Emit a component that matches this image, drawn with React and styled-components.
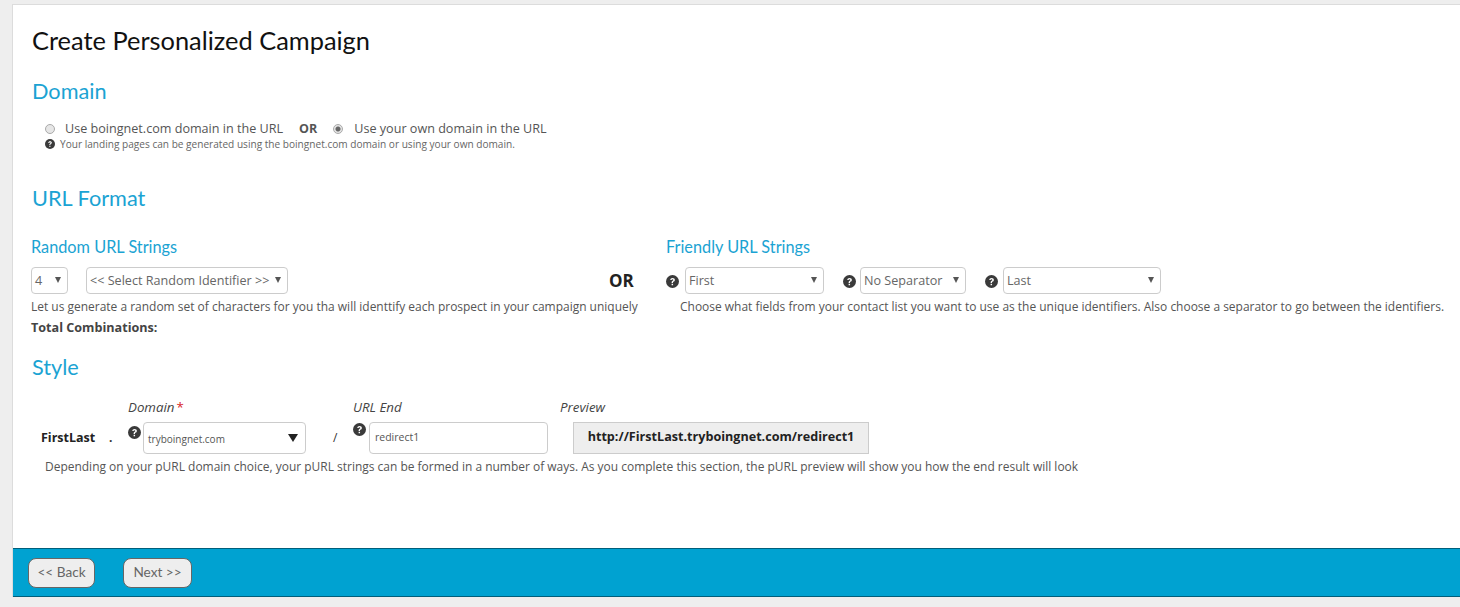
import React from "react";
import styled, { createGlobalStyle } from "styled-components";

const GlobalStyle = createGlobalStyle`
  html, body {
    margin: 0;
    padding: 0;
    height: 100%;
    background: #eeeeee;
    overflow: hidden;
  }
  body {
    font-family: "Open Sans", "Liberation Sans", sans-serif;
    color: #555;
  }
`;

const Page = styled.div`
  width: 1460px;
  height: 607px;
  padding: 4px 0 10px 12px;
  box-sizing: border-box;
  display: flex;
`;

const Panel = styled.div`
  flex: 1;
  display: flex;
  flex-direction: column;
  background: #fff;
  border-top: 1px solid #dcdcdc;
  border-left: 1px solid #dcdcdc;
`;

const Content = styled.div`
  flex: 1;
  padding: 19px 0 0 18px;
`;

const Title = styled.h1`
  margin: 0 0 0 1px;
  font: 400 25.4px/32px Lato, sans-serif;
  color: #111;
`;

const Heading = styled.h2`
  margin: ${(props) => props.$top || 0}px 0 0 1px;
  font: 400 21.7px/28px Lato, sans-serif;
  color: #1ba3d3;
`;

const SubHeading = styled.h3`
  margin: 0;
  font: 400 16.3px/20px Lato, sans-serif;
  color: #1ba3d3;
`;

const RadioRow = styled.div`
  display: flex;
  align-items: center;
  margin: 15px 0 0 14px;
  height: 18px;
  font: 400 12.6px/18px "Open Sans", sans-serif;
  color: #555;
`;

const Radio = styled.span`
  width: 10px;
  height: 10px;
  box-sizing: border-box;
  border-radius: 50%;
  border: 1px solid #aaa;
  background: ${(props) =>
    props.$checked
      ? "radial-gradient(circle, #666 0 2px, #e4e4e4 3px)"
      : "#e6e6e6"};
  margin-right: ${(props) => props.$gap || 10}px;
`;

const OrSmall = styled.b`
  margin: 0 16px 0 16px;
  font-size: 12.5px;
  font-weight: 700;
`;

const Hint = styled.div`
  display: flex;
  align-items: center;
  gap: 5px;
  margin: -2px 0 0 14px;
  height: 16px;
  font: 400 10.1px/16px "Open Sans", sans-serif;
  color: #666;
`;

const Help = styled.svg`
  flex: none;
  width: ${(props) => props.$size || 13}px;
  height: ${(props) => props.$size || 13}px;
  margin: ${(props) => props.$margin || 0};
`;

const HelpIcon = ({ size, margin }) => (
  <Help viewBox="0 0 16 16" $size={size} $margin={margin}>
    <circle cx="8" cy="8" r="8" fill="#3a3a3a" />
    <path
      d="M5.2 6.2C5.3 4.6 6.5 3.7 8.1 3.7c1.6 0 2.8.9 2.8 2.3 0 1.1-.6 1.6-1.4 2.1-.7.4-.9.7-.9 1.3v.3H6.9v-.5c0-1 .4-1.5 1.2-2 .6-.4.9-.6.9-1.1 0-.5-.4-.8-1-.8-.7 0-1 .4-1.1 1H5.2z"
      fill="#fff"
    />
    <rect x="6.9" y="10.8" width="1.8" height="1.8" fill="#fff" />
  </Help>
);

const Columns = styled.div`
  display: flex;
  margin-top: 25px;
`;

const LeftColumn = styled.div`
  width: 578px;
`;

const OrColumn = styled.div`
  width: 57px;
  padding-top: 32px;
  font: 700 17px/24px "Open Sans", sans-serif;
  color: #222;
`;

const RightColumn = styled.div`
  flex: 1;
  white-space: nowrap;
`;

const FieldRow = styled.div`
  display: flex;
  align-items: center;
  margin-top: 10px;
  height: 27px;
`;

const SelectBox = styled.div`
  display: flex;
  align-items: center;
  justify-content: space-between;
  box-sizing: border-box;
  width: ${(props) => props.$width}px;
  height: 27px;
  padding: 0 6px 0 3px;
  margin-right: ${(props) => props.$right || 0}px;
  border: 1px solid #ccc;
  border-radius: 4px;
  background: #fff;
  font: 400 12.6px/25px "Open Sans", sans-serif;
  color: #666;
  white-space: nowrap;
`;

const Caret = styled.span`
  width: 0;
  height: 0;
  border-left: 3px solid transparent;
  border-right: 3px solid transparent;
  border-top: 6px solid #555;
  margin-bottom: 2px;
`;

const Note = styled.p`
  margin: ${(props) => props.$top || 4}px 0 0 ${(props) => props.$left || 0}px;
  font: 400 11.97px/18px "Open Sans", sans-serif;
  color: #555;
  white-space: nowrap;
`;

const Total = styled.div`
  margin-top: 3px;
  font: 700 12.6px/18px "Open Sans", sans-serif;
  color: #444;
`;

const StyleRow = styled.div`
  display: flex;
  align-items: flex-start;
  margin: 17px 0 0 10px;
`;

const Prefix = styled.b`
  width: 68px;
  margin-top: 31px;
  font: 700 12.5px/18px "Open Sans", sans-serif;
  color: #222;
`;

const Separator = styled.span`
  width: ${(props) => props.$width}px;
  margin-top: ${(props) => props.$top}px;
  font: ${(props) => (props.$bold ? 700 : 400)} 12px/18px "Open Sans", sans-serif;
  color: #333;
`;

const Field = styled.div`
  display: flex;
  flex-direction: column;
  margin-right: ${(props) => props.$right || 0}px;
`;

const FieldLabel = styled.div`
  height: 18px;
  font: italic 400 13.3px/18px "Open Sans", sans-serif;
  color: #444;
  margin-left: ${(props) => props.$left || 0}px;
`;

const Required = styled.span`
  color: #d8232a;
  font-style: normal;
  margin-left: 2px;
`;

const FieldBody = styled.div`
  display: flex;
  align-items: flex-start;
  margin-top: ${(props) => props.$top || 6}px;
`;

const DomainSelect = styled(SelectBox)`
  height: 32px;
  font-size: 10px;
  padding: 2px 7px 0 4px;
  color: #555;
`;

const BigCaret = styled(Caret)`
  border-left-width: 5px;
  border-right-width: 5px;
  border-top-width: 8px;
  border-top-color: #222;
`;

const TextInput = styled.input`
  width: 179px;
  height: 32px;
  box-sizing: border-box;
  padding: 0 5px 3px;
  border: 1px solid #ccc;
  border-radius: 4px;
  outline: none;
  font: 400 10.5px "Open Sans", sans-serif;
  color: #555;
`;

const Preview = styled.div`
  box-sizing: border-box;
  width: 296px;
  height: 32px;
  margin-left: 25px;
  border: 1px solid #ccc;
  background: #eee;
  text-align: center;
  font: 700 12.6px/28px "Open Sans", sans-serif;
  color: #222;
`;

const Footer = styled.div`
  display: flex;
  align-items: center;
  gap: 28px;
  box-sizing: border-box;
  height: 49px;
  padding: 0 0 0 15px;
  background: #00a2d1;
  border-top: 1px solid #005f7b;
  border-bottom: 1px solid #005f7b;
`;

const NavButton = styled.button`
  box-sizing: border-box;
  width: ${(props) => props.$width}px;
  height: 30px;
  padding: 0;
  border: 1px solid #666;
  border-radius: 8px;
  background: #eee;
  font: 400 13.6px/1 Lato, sans-serif;
  color: #666;
`;

export default function App() {
  return (
    <>
      <GlobalStyle />
      <Page>
        <Panel>
          <Content>
            <Title>Create Personalized Campaign</Title>
            <Heading $top={21}>Domain</Heading>
            <RadioRow>
              <Radio $gap={10} />
              Use boingnet.com domain in the URL
              <OrSmall>OR</OrSmall>
              <Radio $checked $gap={11} />
              Use your own domain in the URL
            </RadioRow>
            <Hint>
              <HelpIcon size={10} />
              Your landing pages can be generated using the boingnet.com domain or using your own domain.
            </Hint>
            <Heading $top={32}>URL Format</Heading>
            <Columns>
              <LeftColumn>
                <SubHeading>Random URL Strings</SubHeading>
                <FieldRow>
                  <SelectBox $width={37} $right={18}>
                    4<Caret />
                  </SelectBox>
                  <SelectBox $width={202}>
                    {"<< Select Random Identifier >>"}
                    <Caret />
                  </SelectBox>
                </FieldRow>
                <Note>Let us generate a random set of characters for you tha will identtify each prospect in your campaign uniquely</Note>
                <Total>Total Combinations:</Total>
              </LeftColumn>
              <OrColumn>OR</OrColumn>
              <RightColumn>
                <SubHeading>Friendly URL Strings</SubHeading>
                <FieldRow>
                  <HelpIcon size={13} margin="2px 6px 0 0" />
                  <SelectBox $width={139} $right={19}>
                    First<Caret />
                  </SelectBox>
                  <HelpIcon size={13} margin="2px 4px 0 0" />
                  <SelectBox $width={106} $right={19}>
                    No Separator<Caret />
                  </SelectBox>
                  <HelpIcon size={13} margin="2px 5px 0 0" />
                  <SelectBox $width={158}>
                    Last<Caret />
                  </SelectBox>
                </FieldRow>
                <Note $left={14}>Choose what fields from your contact list you want to use as the unique identifiers. Also choose a separator to go between the identifiers.</Note>
              </RightColumn>
            </Columns>
            <Heading $top={16}>Style</Heading>
            <StyleRow>
              <Prefix>FirstLast</Prefix>
              <Separator $width={19} $top={31} $bold>.</Separator>
              <Field $right={27}>
                <FieldLabel>
                  Domain<Required>*</Required>
                </FieldLabel>
                <FieldBody>
                  <HelpIcon size={13} margin="4px 2px 0 0" />
                  <DomainSelect $width={163}>
                    tryboingnet.com
                    <BigCaret />
                  </DomainSelect>
                </FieldBody>
              </Field>
              <Separator $width={20} $top={31}>/</Separator>
              <Field>
                <FieldLabel>URL End</FieldLabel>
                <FieldBody>
                  <HelpIcon size={13} margin="1px 3px 0 0" />
                  <TextInput defaultValue="redirect1" readOnly />
                </FieldBody>
              </Field>
              <Field>
                <FieldLabel $left={12}>Preview</FieldLabel>
                <FieldBody>
                  <Preview>http://FirstLast.tryboingnet.com/redirect1</Preview>
                </FieldBody>
              </Field>
            </StyleRow>
            <Note $left={14}>Depending on your pURL domain choice, your pURL strings can be formed in a number of ways. As you complete this section, the pURL preview will show you how the end result will look</Note>
          </Content>
          <Footer>
            <NavButton $width={67}>{"<< Back"}</NavButton>
            <NavButton $width={69}>{"Next >>"}</NavButton>
          </Footer>
        </Panel>
      </Page>
    </>
  );
}
